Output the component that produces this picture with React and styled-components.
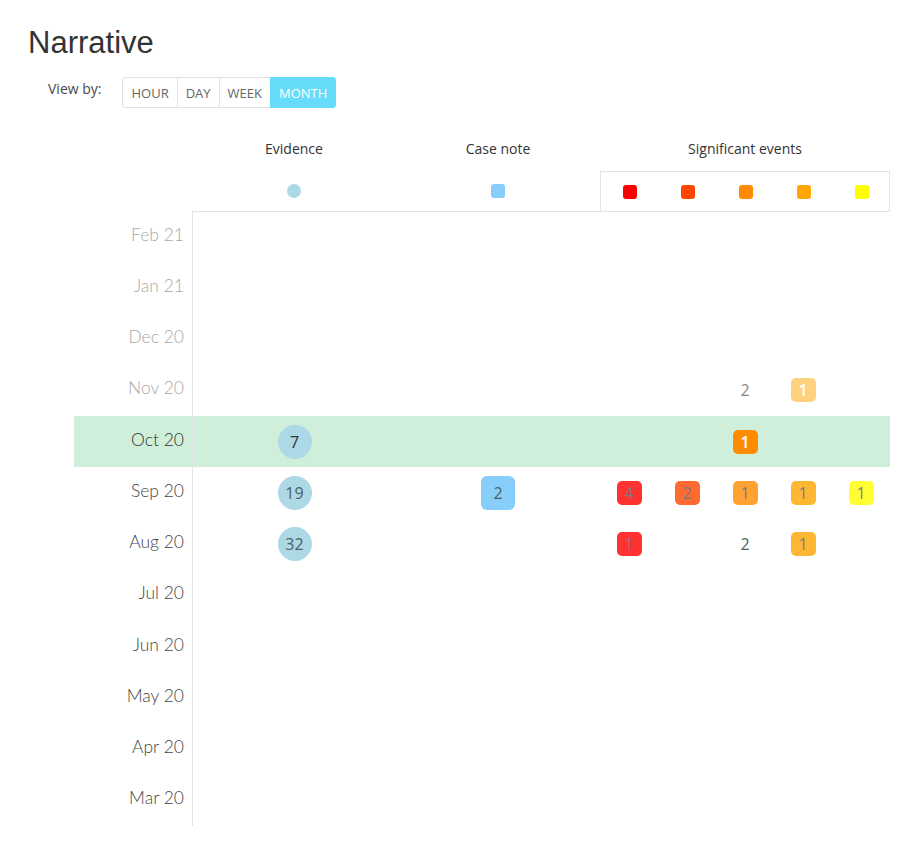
import styled, { createGlobalStyle } from 'styled-components'

const GlobalStyle = createGlobalStyle`
    body {
        margin: 0;
        background: #fff;
        font-family: "Open Sans", "Noto Sans", sans-serif;
    }
`

const SIG_COLORS = ['#ff0000', '#ff4500', '#ff8c00', '#ffa500', '#ffff00']

const MONTHS = [
    { label: 'Feb 21', future: true },
    { label: 'Jan 21', future: true },
    { label: 'Dec 20', future: true },
    { label: 'Nov 20', future: true, sig: [null, null, { text: '2', muted: true }, { count: 1, faded: true }, null] },
    { label: 'Oct 20', current: true, evidence: 7, sig: [null, null, { count: 1, solid: true }, null, null] },
    { label: 'Sep 20', evidence: 19, caseNote: 2, sig: [{ count: 4 }, { count: 2 }, { count: 1 }, { count: 1 }, { count: 1 }] },
    { label: 'Aug 20', evidence: 32, sig: [{ count: 1 }, null, { text: '2' }, { count: 1 }, null] },
    { label: 'Jul 20' },
    { label: 'Jun 20' },
    { label: 'May 20' },
    { label: 'Apr 20' },
    { label: 'Mar 20' },
]

const Page = styled.div`
    padding: 24px 26px 20px 28px;
    width: 916px;
    box-sizing: border-box;
`

const Title = styled.h1`
    margin: 0;
    font-family: "Liberation Sans", Arial, sans-serif;
    font-weight: 400;
    font-size: 31px;
    line-height: 38px;
    color: #333;
`

const Toolbar = styled.div`
    display: flex;
    align-items: flex-start;
    gap: 21px;
    margin: 15px 0 0 20px;
`

const ToolbarLabel = styled.span`
    font-size: 14px;
    color: #4a4a4a;
    padding-top: 2px;
`

const ButtonGroup = styled.div`
    display: flex;
`

const ToggleButton = styled.button`
    height: 31px;
    padding: 0 8px;
    border: 1px solid #dfe1e4;
    margin-left: -1px;
    background: ${p => (p.$active ? '#66dcfa' : '#fff')};
    color: ${p => (p.$active ? '#fff' : '#666')};
    border-color: ${p => (p.$active ? '#66dcfa' : '#dfe1e4')};
    border-radius: ${p => (p.$active ? '0 3px 3px 0' : '0')};
    font-family: "Open Sans", sans-serif;
    font-size: 13px;
    cursor: pointer;
    &:first-child {
        margin-left: 0;
        border-radius: 3px 0 0 3px;
    }
`

const Chart = styled.div`
    margin: 31px 0 0 46px;
    width: 816px;
`

const Grid = styled.div`
    display: grid;
    grid-template-columns: 118px 204px 204px 290px;
`

const ColumnTitle = styled.div`
    text-align: center;
    font-size: 14px;
    color: #333;
    height: 24px;
`

const LegendCell = styled.div`
    display: flex;
    align-items: center;
    justify-content: center;
    height: 40px;
    margin-top: 8px;
`

const SigLegend = styled.div`
    display: grid;
    grid-template-columns: repeat(5, 58px);
    height: 40px;
    margin-top: 8px;
    box-sizing: border-box;
    border: 1px solid #e3e4e8;
    border-bottom: none;
    align-items: center;
    justify-items: center;
`

const Dot = styled.span`
    width: 14px;
    height: 14px;
    border-radius: ${p => (p.$round ? '50%' : '3px')};
    background: ${p => p.$color};
`

const Body = styled.div`
    display: flex;
    flex-direction: column;
`

const Row = styled.div`
    display: grid;
    grid-template-columns: 118px 204px 204px repeat(5, 58px);
    height: 51.25px;
    background: ${p => (p.$current ? '#cfefdb' : 'transparent')};
`

const MonthLabel = styled.div`
    display: flex;
    align-items: center;
    justify-content: flex-end;
    padding: 0 8px 5px 0;
    font-family: "Lato", "Open Sans", sans-serif;
    font-size: 17.5px;
    font-weight: 300;
    color: ${p => (p.$future ? '#a8a8a8' : p.$current ? '#333' : '#444')};
`

const Cell = styled.div`
    display: flex;
    align-items: center;
    justify-content: center;
    border-left: ${p => (p.$first ? '1px solid #e3e4e8' : 'none')};
    ${Row}:first-child & {
        border-top: 1px solid #e3e4e8;
    }
`

const Bubble = styled.span`
    width: 34px;
    height: 34px;
    border-radius: ${p => (p.$round ? '50%' : '6px')};
    background: ${p => p.$color};
    display: flex;
    align-items: center;
    justify-content: center;
    font-size: 16px;
    color: ${p => p.$ink || '#4f6060'};
`

const Badge = styled.span`
    width: 25px;
    height: 24px;
    border-radius: 5px;
    background: ${p => p.$color};
    opacity: ${p => p.$opacity};
    display: flex;
    align-items: center;
    justify-content: center;
    font-size: 16px;
    color: ${p => (p.$light ? '#fff' : '#555e5e')};
    font-weight: ${p => (p.$light ? 600 : 400)};
`

const PlainCount = styled.span`
    font-size: 16px;
    color: ${p => (p.$muted ? '#8a8a8a' : '#4a6565')};
`

const SigCell = ({ item, color }) => {
    if (!item) return <Cell />
    if (item.text) return <Cell><PlainCount $muted={item.muted}>{item.text}</PlainCount></Cell>
    const opacity = item.solid ? 1 : item.faded ? 0.5 : 0.8
    return (
        <Cell>
            <Badge $color={color} $opacity={opacity} $light={item.solid || item.faded}>
                {item.count}
            </Badge>
        </Cell>
    )
}

const App = () => {
    return (
        <Page>
            <GlobalStyle />
            <Title>Narrative</Title>
            <Toolbar>
                <ToolbarLabel>View by:</ToolbarLabel>
                <ButtonGroup>
                    <ToggleButton>HOUR</ToggleButton>
                    <ToggleButton>DAY</ToggleButton>
                    <ToggleButton>WEEK</ToggleButton>
                    <ToggleButton $active>MONTH</ToggleButton>
                </ButtonGroup>
            </Toolbar>
            <Chart>
                <Grid>
                    <div />
                    <ColumnTitle>Evidence</ColumnTitle>
                    <ColumnTitle>Case note</ColumnTitle>
                    <ColumnTitle>Significant events</ColumnTitle>
                    <div />
                    <LegendCell><Dot $round $color="#add8e6" /></LegendCell>
                    <LegendCell><Dot $color="#87cefa" /></LegendCell>
                    <SigLegend>
                        {SIG_COLORS.map(c => <Dot key={c} $color={c} />)}
                    </SigLegend>
                </Grid>
                <Body>
                    {MONTHS.map(m => (
                        <Row key={m.label} $current={m.current}>
                            <MonthLabel $future={m.future} $current={m.current}>{m.label}</MonthLabel>
                            <Cell $first>
                                {m.evidence && (
                                    <Bubble $round $color="#add8e6" $ink={m.current ? '#333' : undefined}>
                                        {m.evidence}
                                    </Bubble>
                                )}
                            </Cell>
                            <Cell>
                                {m.caseNote && <Bubble $color="#87cefa">{m.caseNote}</Bubble>}
                            </Cell>
                            {SIG_COLORS.map((c, i) => (
                                <SigCell key={c} color={c} item={m.sig && m.sig[i]} />
                            ))}
                        </Row>
                    ))}
                </Body>
            </Chart>
        </Page>
    )
}

export default App
